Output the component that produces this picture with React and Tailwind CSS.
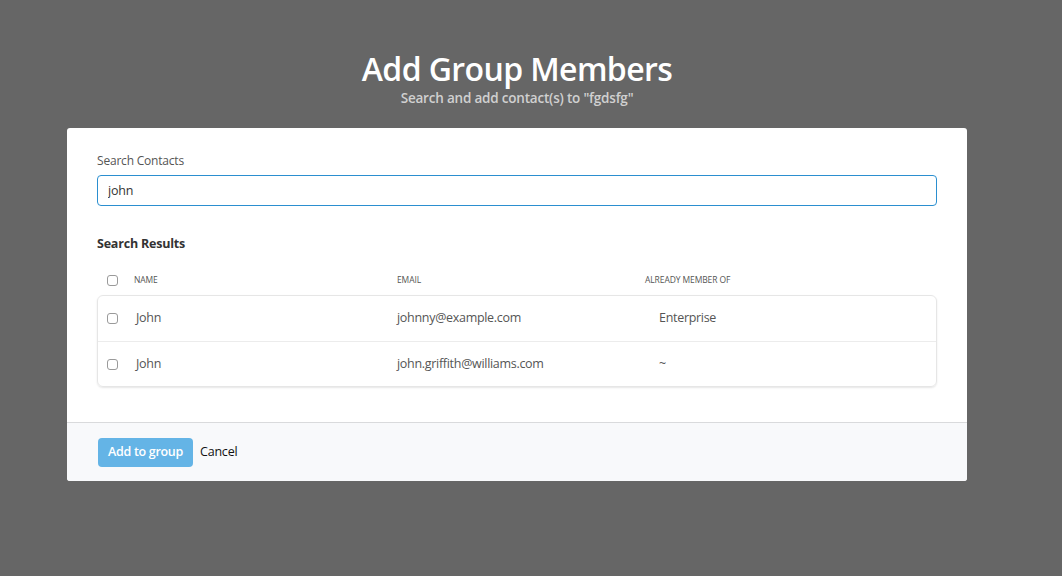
import { useState } from "react"

const results = [
  { name: "John", email: "johnny@example.com", group: "Enterprise" },
  { name: "John", email: "john.griffith@williams.com", group: "~" },
]

function Box() {
  return (
    <span className="block h-[11px] w-[11px] rounded-[3px] border border-[#9a9a9a] bg-white" />
  )
}

export default function App() {
  const [query, setQuery] = useState("john")

  return (
    <div
      className="min-h-[576px] w-full bg-[#666666] pt-[47px]"
      style={{ fontFamily: '"Open Sans", "Noto Sans", sans-serif' }}
    >
      <div className="ml-[67px] w-[900px]">
        <div className="text-center">
          <h1 className="text-[32px] font-semibold leading-[44px] tracking-[-0.6px] text-white">
            Add Group Members
          </h1>
          <p className="-mt-[2px] text-[13.5px] font-semibold leading-[18px] tracking-[-0.2px] text-[#d0d0d0]">
            Search and add contact(s) to "fgdsfg"
          </p>
        </div>

        <div className="mt-[21px] overflow-hidden rounded-[3px] bg-white">
          <div className="px-[30px] pb-[35px] pt-[25px]">
            <label className="block text-[12px] leading-[16px] tracking-[-0.2px] text-[#555]">
              Search Contacts
            </label>
            <input
              value={query}
              onChange={(e) => setQuery(e.target.value)}
              className="mt-[6px] block h-[31px] w-full rounded-[4px] border border-[#2b8fd0] px-[10px] text-[12.5px] tracking-[-0.2px] text-[#333] outline-none"
            />

            <h2 className="mt-[30px] text-[12.5px] font-bold leading-[16px] tracking-[-0.2px] text-[#333]">
              Search Results
            </h2>

            <div className="mt-[20px] flex h-[16px] items-center text-[8.5px] uppercase tracking-[-0.1px] text-[#555]">
              <span className="ml-[10px] w-[27px]">
                <Box />
              </span>
              <span className="w-[263px]">Name</span>
              <span className="w-[248px]">Email</span>
              <span>Already member of</span>
            </div>

            <div className="mt-[7px] rounded-[6px] border border-[#e6e6e6] shadow-[0_1px_2px_rgba(0,0,0,0.1)]">
              {results.map((r, i) => (
                <div
                  key={r.email}
                  className={`flex h-[45px] items-center text-[12.5px] tracking-[-0.3px] text-[#555] ${
                    i > 0 ? "border-t border-[#ececec]" : ""
                  }`}
                >
                  <span className="ml-[9px] w-[29px]">
                    <Box />
                  </span>
                  <span className="w-[261px]">{r.name}</span>
                  <span className="w-[262px]">{r.email}</span>
                  <span>{r.group}</span>
                </div>
              ))}
            </div>
          </div>

          <div className="flex h-[59px] items-center gap-[7px] border-t border-[#d9dadc] bg-[#f8f9fb] px-[31px]">
            <button className="h-[29px] rounded-[4px] bg-[#64b4e6] px-[10px] text-[12.5px] font-semibold tracking-[-0.3px] text-white">
              Add to group
            </button>
            <button className="text-[12.5px] tracking-[-0.2px] text-[#111]">Cancel</button>
          </div>
        </div>
      </div>
    </div>
  )
}
